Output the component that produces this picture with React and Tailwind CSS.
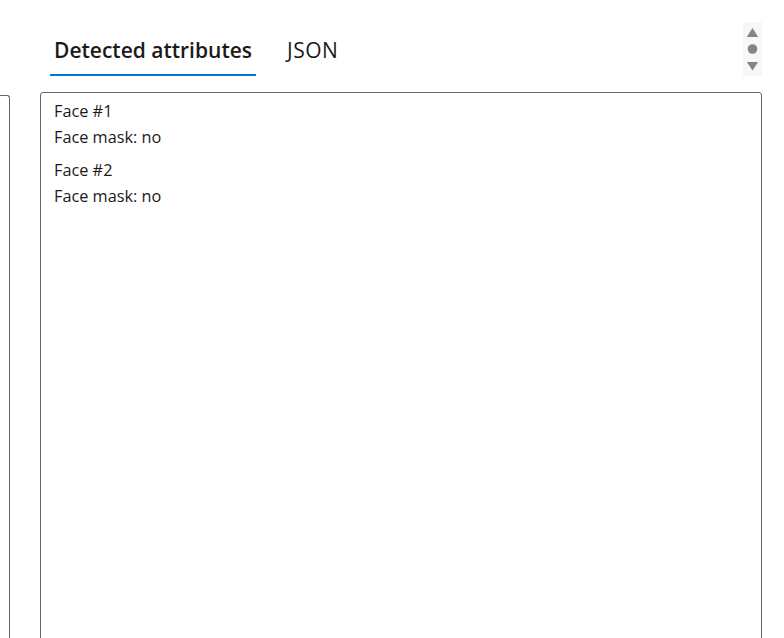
export default function App() {
  return (
    <div className="w-[784px] h-[638px] overflow-hidden bg-white font-['Open_Sans',sans-serif] text-[#1b1a19]">
      <div className="flex pt-[22px]">
        <div className="w-[10px] h-[700px] mt-[73px] border-t border-r border-[#666] rounded-tr-[3px] shrink-0" />
        <div className="ml-[30px] w-[722px] flex flex-col shrink-0">
          <div className="flex justify-between items-end h-[54px]">
            <div className="flex pl-[10px] gap-[27px]">
              <div className="px-1 pb-[10px] border-b-2 border-[#0078d4] text-[21px] leading-[28px] font-semibold">
                Detected attributes
              </div>
              <div className="px-1 pb-[10px] border-b-2 border-transparent text-[21px] leading-[28px] tracking-[0.5px]">
                JSON
              </div>
            </div>
            <div className="self-start w-[19px] h-[54px] bg-[#f7f7f7]">
              <svg width="19" height="54" viewBox="0 0 19 54">
                <polygon points="3.8,15 15.2,15 9.5,6" fill="#858585" />
                <circle cx="9.5" cy="27" r="4.8" fill="#858585" />
                <polygon points="3.8,40 15.2,40 9.5,48.5" fill="#858585" />
              </svg>
            </div>
          </div>
          <div className="mt-[16px] h-[700px] border border-[#666] rounded-[3px] pl-[13px] pt-[5px] text-[16.3px] leading-[26px]">
            <div>
              <div>Face #1</div>
              <div>Face mask: no</div>
            </div>
            <div className="mt-[7px]">
              <div>Face #2</div>
              <div>Face mask: no</div>
            </div>
          </div>
        </div>
      </div>
    </div>
  );
}
